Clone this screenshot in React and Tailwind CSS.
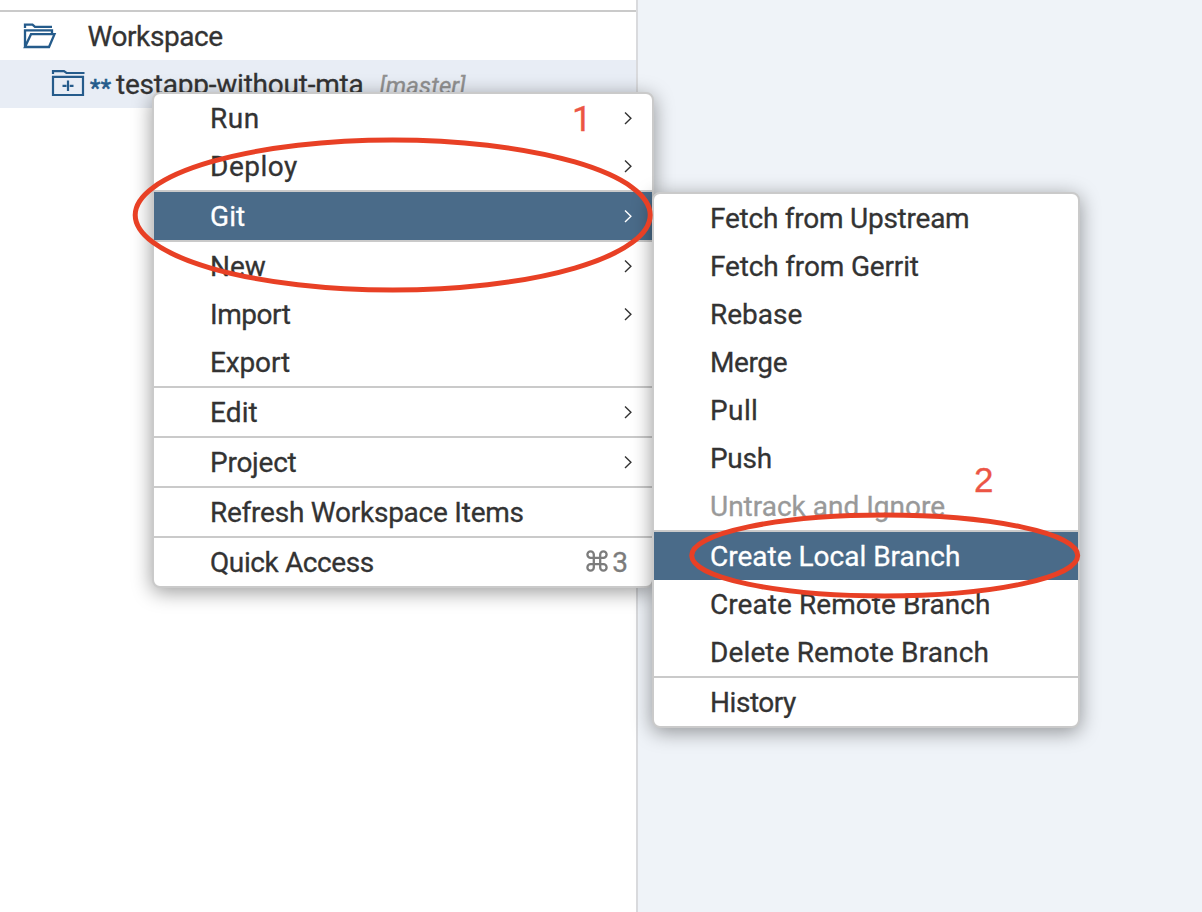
const mainMenu = [
  { label: "Run", arrow: true, tracking: "tracking-[0.5px]" },
  { label: "Deploy", arrow: true, tracking: "tracking-[0.5px]" },
  { label: "Git", arrow: true, active: true, sep: true, tracking: "tracking-[0.1px]" },
  { label: "New", arrow: true, sep: true, tracking: "tracking-[0px]" },
  { label: "Import", arrow: true, tracking: "tracking-[-0.45px]" },
  { label: "Export", tracking: "tracking-[-0.15px]" },
  { label: "Edit", arrow: true, sep: true, tracking: "tracking-[0.1px]" },
  { label: "Project", arrow: true, sep: true, tracking: "tracking-[-0.25px]" },
  { label: "Refresh Workspace Items", sep: true, tracking: "tracking-[-0.24px]" },
  { label: "Quick Access", shortcut: "3", sep: true, tracking: "tracking-[-0.4px]" },
];

const gitMenu = [
  { label: "Fetch from Upstream", tracking: "tracking-[-0.24px]" },
  { label: "Fetch from Gerrit", tracking: "tracking-[-0.16px]" },
  { label: "Rebase", tracking: "tracking-[0px]" },
  { label: "Merge", tracking: "tracking-[-0.4px]" },
  { label: "Pull", tracking: "tracking-[0.4px]" },
  { label: "Push", tracking: "tracking-[-0.3px]" },
  { label: "Untrack and Ignore", disabled: true, tracking: "tracking-[0px]" },
  { label: "Create Local Branch", active: true, sep: true, tracking: "tracking-[0px]" },
  { label: "Create Remote Branch", tracking: "tracking-[0.06px]" },
  { label: "Delete Remote Branch", tracking: "tracking-[0.12px]" },
  { label: "History", sep: true, tracking: "tracking-[-0.45px]" },
];

function Chevron() {
  return (
    <svg width="8" height="14" viewBox="0 0 8 14" fill="none" stroke="currentColor" strokeWidth="1.4" className="mr-5">
      <path d="M1 0.5 L6.9 6.3 L1 12.1" />
    </svg>
  );
}

function CommandGlyph() {
  return (
    <svg width="22" height="22" viewBox="0 0 22 22" fill="none" stroke="currentColor" strokeWidth="2.3" className="-mt-1">
      <path d="M7.8 7.8 H14.2 V14.2 H7.8 Z M7.8 7.8 H4.6 A3.2 3.2 0 1 1 7.8 4.6 Z M14.2 7.8 V4.6 A3.2 3.2 0 1 1 17.4 7.8 Z M14.2 14.2 H17.4 A3.2 3.2 0 1 1 14.2 17.4 Z M7.8 14.2 V17.4 A3.2 3.2 0 1 1 4.6 14.2 Z" />
    </svg>
  );
}

function Menu({ items, className }) {
  return (
    <div className={`absolute overflow-hidden rounded-lg border-2 border-[#cacaca] bg-white shadow-[0_4px_20px_rgba(0,0,0,0.4)] ${className}`}>
      {items.map((item) => (
        <div key={item.label} className={item.sep ? "border-t-2 border-[#cacaca]" : ""}>
          <div
            className={`flex h-12 items-center justify-between pl-14 pt-0.5 ${
              item.active ? "bg-[#4a6b89] text-white" : item.disabled ? "text-[#999999]" : "text-[#333333]"
            }`}
          >
            <span className={`whitespace-nowrap ${item.tracking}`}>{item.label}</span>
            {item.arrow && <Chevron />}
            {item.shortcut && (
              <span className="mr-6 flex items-center gap-1 text-[#7c7c7c]">
                <CommandGlyph />
                {item.shortcut}
              </span>
            )}
          </div>
        </div>
      ))}
    </div>
  );
}

export default function App() {
  return (
    <div className="relative flex h-[912px] w-[1202px] overflow-hidden bg-[#eff3f8] font-[Roboto,sans-serif] text-[28px] leading-[48px] text-[#333333] [-webkit-text-stroke:0.3px_currentColor]">
      <div className="w-[638px] border-r-2 border-[#d9dadd] bg-white pt-2.5">
        <div className="flex h-[50px] items-center border-t-2 border-[#cacaca] pl-[23px]">
          <svg width="34" height="26" viewBox="0 0 34 26" fill="none" stroke="#255b8b" strokeWidth="2.3">
            <path d="M2 5 V1.6 H9.5 L12 3.8 H29 M2 24 V7.4 H29 V11 M2 24 L8 11.2 H31.5 L26 24 Z" />
          </svg>
          <span className="ml-[30.5px] pt-0.5 tracking-[-0.42px]">Workspace</span>
        </div>
        <div className="flex h-12 items-center bg-[#e8edf5] pl-[51px]">
          <svg width="34" height="28" viewBox="0 0 34 28" fill="none" stroke="#255b8b" strokeWidth="2.2">
            <path d="M2 4 V1.2 H13 L15.5 3 H33.5 M2 6.9 H32 V25 H2 Z M11.5 15.8 H15.5 M18.7 15.8 H22.5 M17 10.5 V21" />
          </svg>
          <span className="ml-[5px] w-[26px] pt-2 text-[24px] tracking-[0.4px] text-[#255b8b] [-webkit-text-stroke:0.6px_#255b8b]">**</span>
          <span className="whitespace-nowrap pt-0.5 tracking-[-0.22px]">testapp-without-mta</span>
          <span className="ml-[16px] pt-[3px] text-[24px] italic tracking-[0.1px] text-[#919191]">[master]</span>
        </div>
      </div>

      <Menu items={mainMenu} className="left-[152px] top-[92px] w-[502px]" />
      <Menu items={gitMenu} className="left-[652px] top-[192px] w-[428px]" />

      <span className="absolute left-[572px] top-[96px] text-[35px] leading-[48px] text-[#ec5545]">1</span>
      <span className="absolute left-[974px] top-[456px] font-['Liberation_Sans',sans-serif] text-[35px] leading-[48px] text-[#ec5545]">2</span>

      <svg width="1202" height="912" viewBox="0 0 1202 912" fill="none" stroke="#e84025" strokeWidth="5" className="absolute left-0 top-0">
        <ellipse cx="392.7" cy="215" rx="257.5" ry="75" />
        <ellipse cx="884.7" cy="555.5" rx="193" ry="40.5" />
      </svg>
    </div>
  );
}
